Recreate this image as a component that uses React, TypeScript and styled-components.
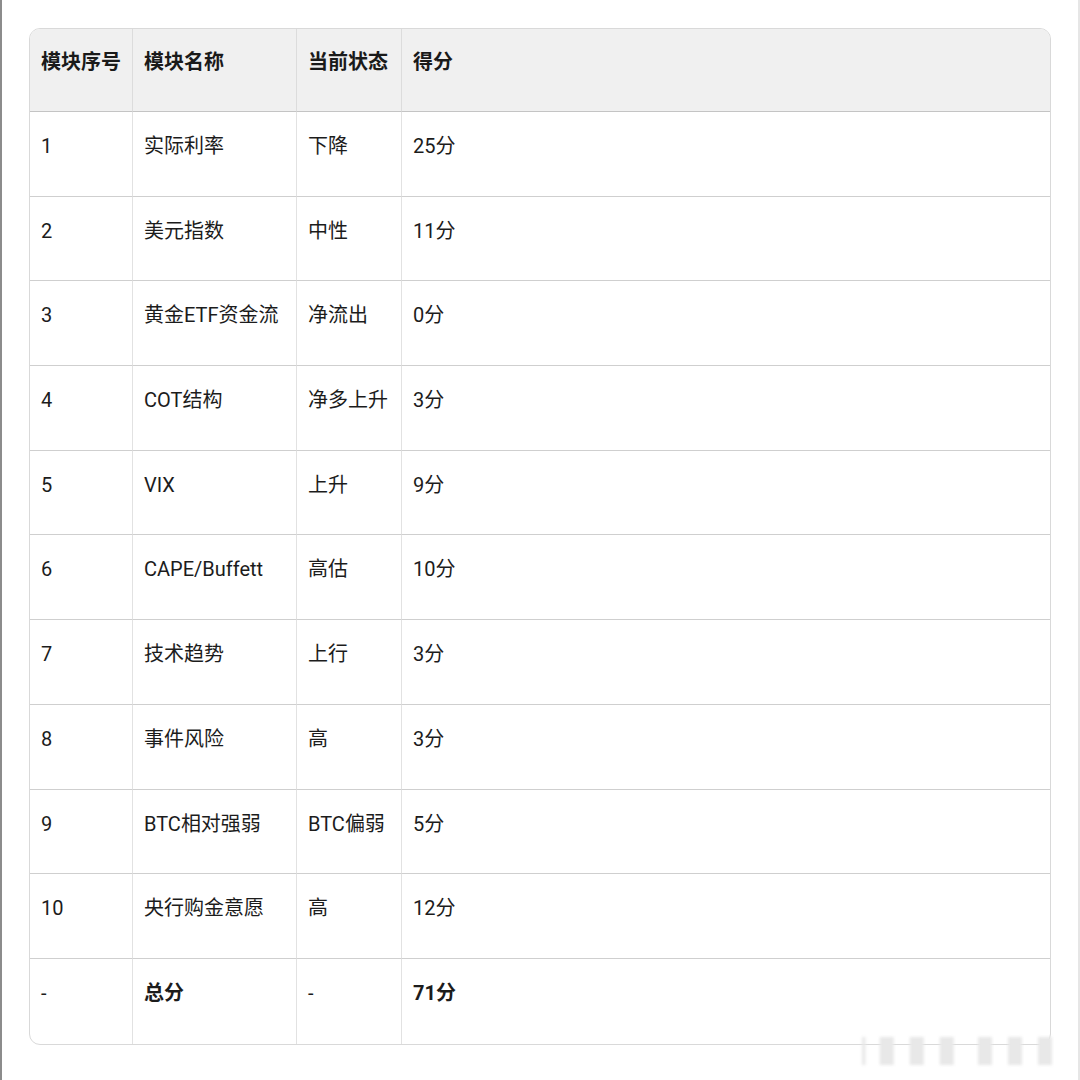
import React from "react";
import styled, { createGlobalStyle } from "styled-components";

const Global = createGlobalStyle`
  html, body { margin: 0; padding: 0; background: #ffffff; }
  body { font-family: "Roboto", "Noto Sans CJK SC", sans-serif; color: #1c1c1c; }
`;

const Page = styled.div`
  position: relative;
  width: 1080px;
  height: 1080px;
  box-sizing: border-box;
  border-left: 2px solid #8c8c8c;
  border-right: 2px solid #e6e6e6;
  padding: 28px 27px 0 27px;
  overflow: hidden;
`;

const Frame = styled.div`
  box-sizing: border-box;
  border: 1px solid #d9d9d9;
  border-radius: 11px;
  overflow: hidden;
  width: 1022px;
`;

const Table = styled.table`
  border-collapse: separate;
  border-spacing: 0;
  width: 100%;
  table-layout: fixed;
`;

const Th = styled.th<{ $w?: number; $last?: boolean }>`
  width: ${(p) => (p.$w ? `${p.$w}px` : "auto")};
  height: 83px;
  box-sizing: border-box;
  background: #f0f0f0;
  border-bottom: 1px solid #c4c4c4;
  border-right: ${(p) => (p.$last ? "none" : "1px solid #dcdcdc")};
  padding: 18px 0 0 11px;
  vertical-align: top;
  text-align: left;
  font-size: 20px;
  line-height: 30px;
  font-weight: 700;
  color: #1a1a1a;
  white-space: nowrap;
`;

const Td = styled.td<{ $last?: boolean; $bottom?: boolean; $bold?: boolean }>`
  height: 84.7px;
  box-sizing: border-box;
  border-bottom: ${(p) => (p.$bottom ? "none" : "1px solid #cfcfcf")};
  border-right: ${(p) => (p.$last ? "none" : "1px solid #e2e2e2")};
  padding: 19px 0 0 11px;
  vertical-align: top;
  text-align: left;
  font-size: 20px;
  line-height: 30px;
  font-weight: ${(p) => (p.$bold ? 700 : 400)};
  color: #1c1c1c;
  white-space: nowrap;
`;

const Watermark = styled.div`
  position: absolute;
  right: 10px;
  bottom: 10px;
  font-size: 28px;
  font-weight: 700;
  color: #e8e8e8;
  filter: blur(1.5px);
  letter-spacing: 2px;
  font-family: "Noto Sans CJK SC", sans-serif;
`;

const rows: [string, string, string, string][] = [
  ["1", "实际利率", "下降", "25分"],
  ["2", "美元指数", "中性", "11分"],
  ["3", "黄金ETF资金流", "净流出", "0分"],
  ["4", "COT结构", "净多上升", "3分"],
  ["5", "VIX", "上升", "9分"],
  ["6", "CAPE/Buffett", "高估", "10分"],
  ["7", "技术趋势", "上行", "3分"],
  ["8", "事件风险", "高", "3分"],
  ["9", "BTC相对强弱", "BTC偏弱", "5分"],
  ["10", "央行购金意愿", "高", "12分"],
];

export default function App() {
  return (
    <>
      <Global />
      <Page>
        <Frame>
          <Table>
            <thead>
              <tr>
                <Th $w={103}>模块序号</Th>
                <Th $w={164}>模块名称</Th>
                <Th $w={105}>当前状态</Th>
                <Th $last>得分</Th>
              </tr>
            </thead>
            <tbody>
              {rows.map((r) => (
                <tr key={r[0]}>
                  <Td>{r[0]}</Td>
                  <Td>{r[1]}</Td>
                  <Td>{r[2]}</Td>
                  <Td $last>{r[3]}</Td>
                </tr>
              ))}
              <tr>
                <Td $bottom>-</Td>
                <Td $bottom $bold>总分</Td>
                <Td $bottom>-</Td>
                <Td $bottom $last $bold>71分</Td>
              </tr>
            </tbody>
          </Table>
        </Frame>
        <Watermark>┃▌▌▌ ▌▌▌</Watermark>
      </Page>
    </>
  );
}
